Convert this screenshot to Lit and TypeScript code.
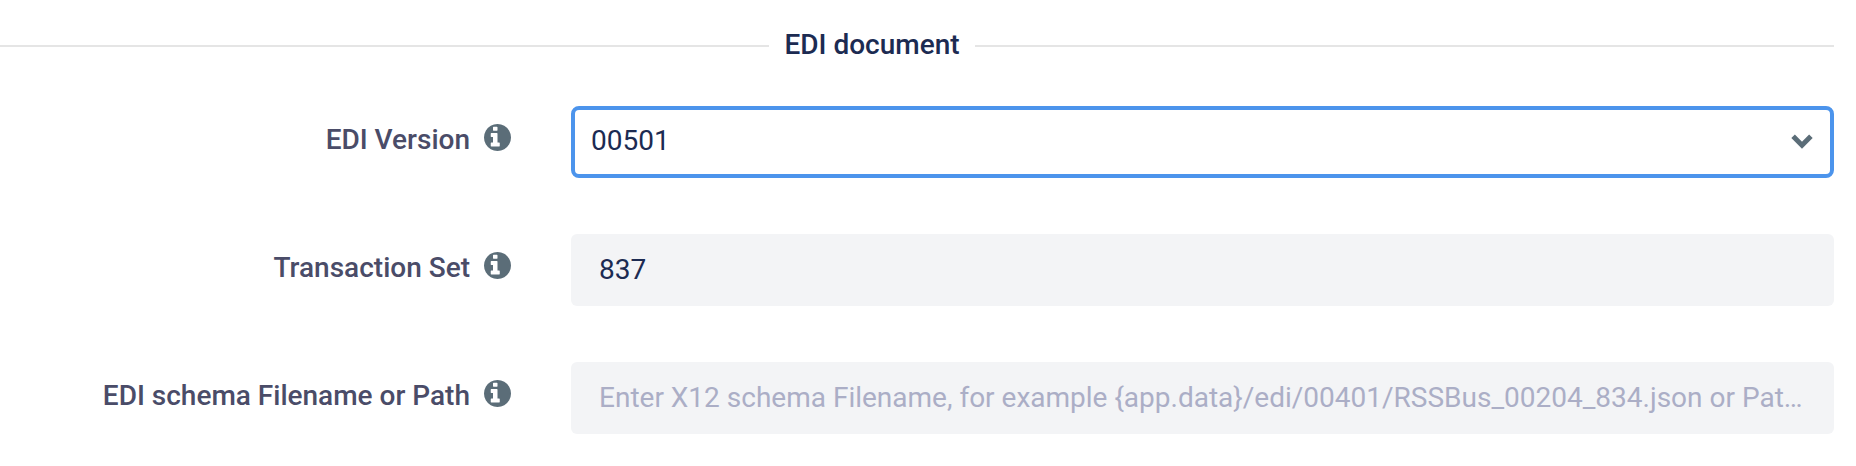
import { LitElement, html, css } from "lit";
import { customElement } from "lit/decorators.js";

const infoPath =
  "M1024 1376v-160q0-14-9-23t-23-9h-96v-512q0-14-9-23t-23-9h-320q-14 0-23 9t-9 23v160q0 14 9 23t23 9h96v320h-96q-14 0-23 9t-9 23v160q0 14 9 23t23 9h448q14 0 23-9t9-23zM896 480v-160q0-14-9-23t-23-9h-192q-14 0-23 9t-9 23v160q0 14 9 23t23 9h192q14 0 23-9t9-23zM1664 896q0 209-103 385.500t-279.500 279.500-385.500 103-385.500-103-279.500-279.500-103-385.500 103-385.500 279.500-279.500 385.500-103 385.500 103 279.500 279.500 103 385.500z";

@customElement("app-root")
export class AppRoot extends LitElement {
  static styles = css`
    :host {
      display: block;
      box-sizing: border-box;
      padding: 25px 22px 32px 0;
      background: #fff;
      color: #1c2b52;
      font-family: Roboto, sans-serif;
      font-size: 28px;
      line-height: 40px;
    }
    .divider {
      display: grid;
      grid-template-columns: 770fr auto 860fr;
      align-items: center;
      column-gap: 15px;
      margin: 0 0 41px;
      font-size: 28px;
      font-weight: 500;
    }
    .divider::before,
    .divider::after {
      content: "";
      height: 2px;
      margin-top: 2px;
      background: #e5e5e5;
    }
    .fields {
      display: grid;
      row-gap: 56px;
    }
    .row {
      display: grid;
      grid-template-columns: 571fr 1263fr;
    }
    .caption {
      display: flex;
      justify-content: flex-end;
      align-items: flex-start;
      gap: 14px;
      padding: 14px 60px 0 0;
      color: #4a4c68;
      font-weight: 500;
      white-space: nowrap;
    }
    .info {
      display: block;
      width: 27px;
      height: 27px;
      margin-top: 4px;
      fill: #5b6d78;
    }
    .control {
      display: grid;
      align-items: center;
      min-width: 0;
    }
    .box {
      grid-area: 1 / 1;
      box-sizing: border-box;
      width: 100%;
      height: 72px;
      margin: 0;
      border: 0;
      border-radius: 6px;
      padding: 0 28px 2px;
      outline: 0;
      background: #f3f4f6;
      color: #1c2b52;
      font: inherit;
      text-overflow: ellipsis;
    }
    .box::placeholder {
      color: #abaec6;
      opacity: 1;
      text-overflow: ellipsis;
    }
    .select {
      appearance: none;
      border: 4px solid #4c94ec;
      border-radius: 8px;
      padding: 0 60px 2px 16px;
      background: #fff;
    }
    .chevron {
      grid-area: 1 / 1;
      justify-self: end;
      width: 22px;
      height: 15px;
      margin: 0 21px 2px 0;
      fill: none;
      stroke: #5b6d78;
      stroke-width: 5;
      pointer-events: none;
    }
  `;

  private caption(id: string, text: string) {
    return html`<div class="caption">
      <label for=${id}>${text}</label>
      <svg class="info" viewBox="128 128 1536 1536" aria-hidden="true">
        <path d=${infoPath}></path>
      </svg>
    </div>`;
  }

  render() {
    return html`
      <h2 class="divider">EDI document</h2>
      <form class="fields">
        <div class="row">
          ${this.caption("version", "EDI Version")}
          <div class="control">
            <select class="box select" id="version">
              <option selected>00501</option>
            </select>
            <svg class="chevron" viewBox="0 0 22 15" aria-hidden="true">
              <path d="M2.100 2.300L11 11.200L19.900 2.300"></path>
            </svg>
          </div>
        </div>
        <div class="row">
          ${this.caption("transaction", "Transaction Set")}
          <div class="control">
            <input class="box" id="transaction" type="text" value="837" />
          </div>
        </div>
        <div class="row">
          ${this.caption("schema", "EDI schema Filename or Path")}
          <div class="control">
            <input
              class="box"
              id="schema"
              type="text"
              placeholder="Enter X12 schema Filename, for example {app.data}/edi/00401/RSSBus_00204_834.json or Path to the schema file"
            />
          </div>
        </div>
      </form>
    `;
  }
}
